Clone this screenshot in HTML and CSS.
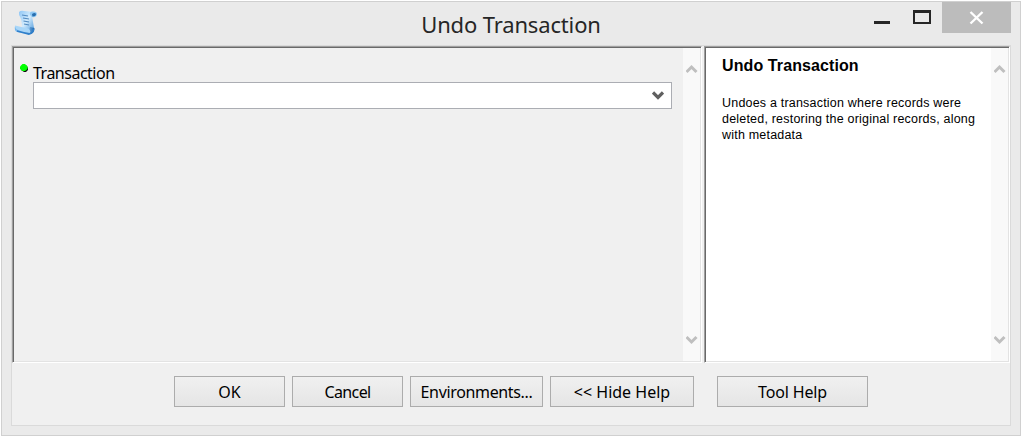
FILE: index.html
```html
<!DOCTYPE html>
<html lang="en">
<head>
<meta charset="utf-8">
<title>Undo Transaction</title>
<link rel="stylesheet" href="styles.css">
</head>
<body>
<div class="window">
  <header class="titlebar">
    <svg class="app-icon" width="24" height="26" viewBox="0 0 24 26">
      <defs>
        <linearGradient id="paper" x1="0" y1="0" x2="1" y2="1">
          <stop offset="0" stop-color="#8fc6f5"/><stop offset=".5" stop-color="#d2ebfd"/><stop offset="1" stop-color="#4b97da"/>
        </linearGradient>
        <linearGradient id="roll" x1="0" y1="0" x2="1" y2="0">
          <stop offset="0" stop-color="#6fb3ec"/><stop offset=".45" stop-color="#b9defb"/><stop offset="1" stop-color="#1b66b0"/>
        </linearGradient>
      </defs>
      <path d="M5 2Q7 0 10 1L20 2 18 6 20 18 18 22 7 21 8 17Q8 9 5 5Z" fill="url(#paper)"/>
      <path d="M16 5Q15 2 18 1.500Q23 1 23 4Q22 8 18 7Z" fill="#8fc8f4"/>
      <path d="M18 4Q21 2 22 4Q22 6.500 18.500 6.500Z" fill="#286eae"/>
      <path d="M1 16Q0 21 3 22L15 24.500Q20.500 24 20.500 18L16 17 15 21 4 18Z" fill="url(#roll)"/>
      <path d="M1 15.500L14 18.500Q17 20 16 23L4 20Q1 19 1 15.500Z" fill="#a9d6f8"/>
      <path d="M3 21L15 24Q19 23 19.500 19" fill="none" stroke="#2f7fca" stroke-width="1.800"/>
      <path d="M8 5L14 6M9 8L15 9M9.500 11L15 12M10 14L15 15" stroke="#528ac0" stroke-width="1.200"/>
    </svg>
    <h1 class="title">Undo Transaction</h1>
    <div class="controls">
      <span class="minimize"></span>
      <span class="maximize"></span>
      <span class="close"><svg width="16" height="14" viewBox="0 0 16 14"><path d="M1.500 1L13.500 12.500M13.500 1L1.500 12.500" stroke="#fff" stroke-width="2.400"/></svg></span>
    </div>
  </header>
  <main class="client">
    <div class="panels">
      <section class="panel form-panel">
        <div class="form">
          <svg class="required" width="10" height="10" viewBox="0 0 10 10"><path d="M3 1H6L8 4V6L6 8H4L1 6Z" fill="#111"/><path d="M2.500 0H5L7.500 2.500V5L5 7H2.500L0 5V2.500Z" fill="#0f0"/></svg>
          <div class="field">
            <div class="label">Transaction</div>
            <div class="select"><svg width="12" height="10" viewBox="0 0 12 10"><path d="M1 1.500L6 6.500 11 1.500" fill="none" stroke="#606060" stroke-width="3.200"/></svg></div>
          </div>
        </div>
        <div class="scrollbar">
          <svg width="12" height="10" viewBox="0 0 12 10"><path d="M.500 8L5.500 3 10.500 8" fill="none" stroke="#bfbfbf" stroke-width="3"/></svg>
          <svg width="12" height="10" viewBox="0 0 12 10"><path d="M.500 2L5.500 7 10.500 2" fill="none" stroke="#bfbfbf" stroke-width="3"/></svg>
        </div>
      </section>
      <section class="panel help-panel">
        <div class="help">
          <h2 class="help-title">Undo Transaction</h2>
          <p class="help-text">Undoes a transaction where records were<br>deleted, restoring the original records, along<br>with metadata</p>
        </div>
        <div class="scrollbar">
          <svg width="12" height="10" viewBox="0 0 12 10"><path d="M.500 8L5.500 3 10.500 8" fill="none" stroke="#bfbfbf" stroke-width="3"/></svg>
          <svg width="12" height="10" viewBox="0 0 12 10"><path d="M.500 2L5.500 7 10.500 2" fill="none" stroke="#bfbfbf" stroke-width="3"/></svg>
        </div>
      </section>
    </div>
    <footer class="actions">
      <button class="button ok">OK</button>
      <button class="button cancel">Cancel</button>
      <button class="button environments">Environments...</button>
      <button class="button hide-help">&lt;&lt; Hide Help</button>
      <button class="button tool-help">Tool Help</button>
    </footer>
  </main>
</div>
</body>
</html>
```
FILE: styles.css
```css
* { box-sizing: border-box; }
body { margin: 0; padding: 1px; background: #fff; overflow: hidden; }
svg { display: block; }
.window {
  width: 1020px; height: 435px;
  border: 1px solid #d0d0d0;
  background: #eaeaea;
  padding: 0 9px;
  font-family: "Noto Sans", sans-serif;
}
.titlebar {
  display: grid; grid-template-columns: 137px 1fr 137px;
  height: 43px;
}
.app-icon { margin: 8px 0 0 3px; }
.title {
  margin: 4px 0 0; text-align: center; white-space: nowrap;
  font-size: 22px; line-height: 36px; font-weight: 400; color: #262626;
  letter-spacing: -0.15px;
}
.controls { display: flex; justify-content: flex-end; }
.minimize { width: 16px; height: 3px; margin: 19px 23px 0 0; background: #262626; }
.maximize { width: 18px; height: 14px; margin: 8px 11px 0 0; border: 2px solid #262626; border-top-width: 3px; }
.close {
  display: flex; align-items: center; justify-content: center;
  width: 69px; height: 31px; background: #bcbcbc;
}
.client { height: 381px; border: 1px solid #dadada; background: #f0f0f0; }
.panels { display: flex; gap: 2px; height: 317px; }
.panel {
  display: flex; height: 317px;
  border: 1px solid; border-color: #a0a0a0 #fff #fff #a0a0a0;
  box-shadow: inset 0 1px #696969, inset -1px -1px #e3e3e3;
}
.panel::before { content: ""; width: 1px; background: #696969; }
.form-panel { width: 690px; }
.help-panel { width: 306px; background: #fff; }
.form { display: flex; flex: 1; padding: 17px 0 0 6px; }
.required { margin-right: 3px; }
.field { width: 639px; }
.label { height: 18px; font-size: 16px; line-height: 18px; letter-spacing: -0.5px; color: #000; white-space: nowrap; }
.select {
  display: flex; justify-content: flex-end; padding: 8px 7px 0 0;
  height: 27px; border: 1px solid #abadb3; background: #fff;
}
.scrollbar {
  display: flex; flex-direction: column; justify-content: space-between;
  width: 17px; margin: 1px 1px 1px 0; padding: 16px 0 16px 3px; background: #f9f9f9;
}
.help { flex: 1; padding: 9px 0 0 16px; font-family: "Liberation Sans", Arial, sans-serif; color: #000; white-space: nowrap; }
.help-title { margin: 0; font-size: 16px; line-height: 20px; font-weight: 700; letter-spacing: 0.1px; }
.help-text { margin: 19px 0 0; font-size: 12.500px; line-height: 16px; letter-spacing: 0.2px; }
.actions { display: flex; gap: 7px; padding: 13px 0 0 162px; }
.button {
  height: 31px; padding: 1px 0 0; border: 1px solid #acacac;
  background: linear-gradient(#f0f0f0, #e5e5e5);
  font: 16px/28px "Noto Sans", sans-serif; color: #000; white-space: nowrap;
}
.ok, .cancel { width: 111px; }
.cancel { letter-spacing: -0.6px; }
.environments { width: 133px; letter-spacing: -0.35px; }
.hide-help { width: 144px; }
.tool-help { width: 151px; margin-left: 16px; letter-spacing: -0.15px; }
```
